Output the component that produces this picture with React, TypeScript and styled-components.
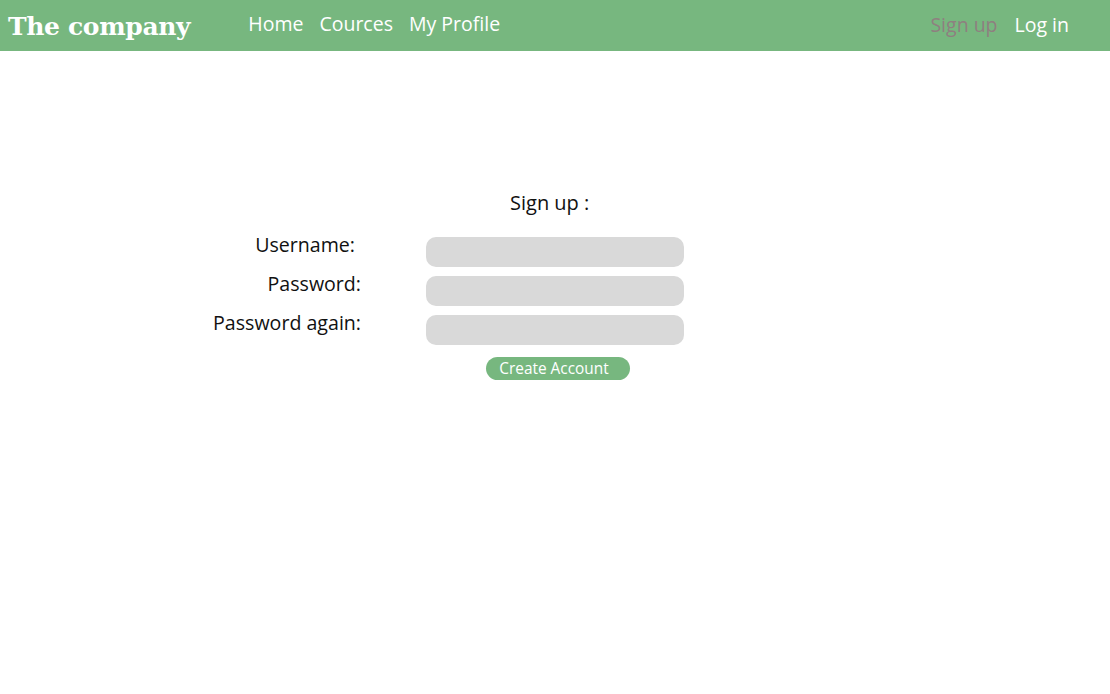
import styled, { createGlobalStyle } from 'styled-components';

const GlobalStyle = createGlobalStyle`
  body {
    margin: 0;
    background: #fff;
    font-family: "Open Sans", "Noto Sans", sans-serif;
  }
`;

const Header = styled.header`
  display: flex;
  align-items: center;
  height: 51px;
  padding: 0 41px 0 8px;
  background-color: #77b77f;
  color: #fff;
`;

const Logo = styled.div`
  font-family: "DejaVu Serif", "Liberation Serif", serif;
  font-weight: bold;
  font-size: 25px;
  letter-spacing: -0.35px;
  margin-right: 58px;
  padding-top: 2px;
`;

const Nav = styled.nav`
  display: flex;
  gap: 16px;
  flex: 1;
`;

const NavLink = styled.a<{ $muted?: boolean }>`
  font-size: 19.5px;
  color: ${({ $muted }) => ($muted ? '#8f7f80' : '#fff')};
  text-decoration: none;
  cursor: pointer;
  line-height: 1;
  padding-bottom: 3px;
`;

const Auth = styled.div`
  display: flex;
  gap: 17px;
  padding-top: 1px;
`;

const Main = styled.main`
  padding: 138px 0 0 200px;
`;

const Title = styled.h2`
  margin: 0 0 21px 310px;
  font-size: 20px;
  font-weight: 400;
  color: #111;
  line-height: 27px;
`;

const FormGrid = styled.div`
  display: grid;
  grid-template-columns: 161px 258px;
  column-gap: 65px;
  row-gap: 9px;
  align-items: start;
`;

const Label = styled.label<{ $shift?: number }>`
  font-size: 19.6px;
  color: #111;
  text-align: right;
  line-height: 26px;
  margin-top: -5px;
  white-space: nowrap;
  padding-right: ${({ $shift }) => $shift ?? 0}px;
`;

const Input = styled.input`
  border: none;
  outline: none;
  background: #d9d9d9;
  border-radius: 10px;
  height: 30px;
  padding: 0 10px;
  box-sizing: border-box;
  width: 100%;
  font-family: inherit;
  font-size: 15px;
`;

const ButtonRow = styled.div`
  grid-column: 2;
  display: flex;
  margin-top: 3px;
  padding-left: 60px;
`;

const Button = styled.button`
  border: none;
  background: #77b77f;
  color: #fff;
  font-family: "Open Sans", sans-serif;
  font-size: 15.4px;
  height: 23px;
  width: 144px;
  border-radius: 12px;
  padding: 0 8px 1px 0;
  cursor: pointer;
`;

export default function App() {
  return (
    <>
      <GlobalStyle />
      <Header>
        <Logo>The company</Logo>
        <Nav>
          <NavLink>Home</NavLink>
          <NavLink>Cources</NavLink>
          <NavLink>My Profile</NavLink>
        </Nav>
        <Auth>
          <NavLink $muted>Sign up</NavLink>
          <NavLink>Log in</NavLink>
        </Auth>
      </Header>
      <Main>
        <Title>Sign up :</Title>
        <FormGrid>
          <Label $shift={6}>Username:</Label>
          <Input type="text" />
          <Label>Password:</Label>
          <Input type="password" />
          <Label>Password again:</Label>
          <Input type="password" />
          <ButtonRow>
            <Button>Create Account</Button>
          </ButtonRow>
        </FormGrid>
      </Main>
    </>
  );
}
